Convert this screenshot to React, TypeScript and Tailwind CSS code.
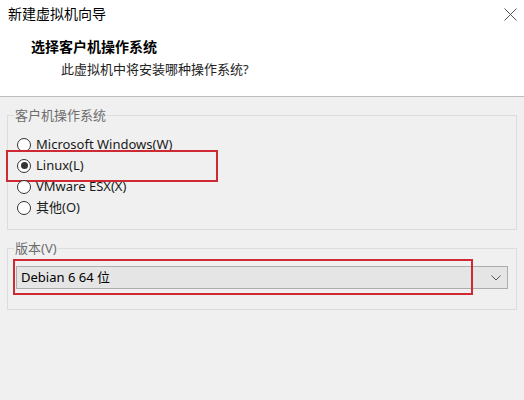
import React from 'react';

const cjk = "font-['Noto_Sans','Noto_Sans_CJK_SC',sans-serif]";

const options = [
  { label: 'Microsoft Windows(W)', checked: false },
  { label: 'Linux(L)', checked: true },
  { label: 'VMware ESX(X)', checked: false },
  { label: '其他(O)', checked: false },
];

const Radio: React.FC<{ checked: boolean }> = ({ checked }) => (
  <span className="w-[14px] h-[14px] rounded-full border border-[#333333] bg-white flex items-center justify-center flex-shrink-0">
    {checked && <span className="w-[7px] h-[7px] rounded-full bg-[#333333]" />}
  </span>
);

const App: React.FC = () => {
  return (
    <div className={`w-[524px] h-screen bg-[#f0f0f0] text-[13px] ${cjk}`}>
      {/* Wizard header */}
      <div className="h-[97px] bg-white border-b border-[#bdbdbd] relative">
        <div className="pl-[8px] pt-[4px] text-[14px] leading-[20px] text-black">新建虚拟机向导</div>
        <button className="absolute right-[6px] top-[6px] w-[16px] h-[16px] flex items-center justify-center text-[#555]">
          <svg width="13" height="13" viewBox="0 0 13 13" fill="none" stroke="currentColor" strokeWidth="1">
            <path d="M0.5 0.5 L12.5 12.5 M12.5 0.5 L0.5 12.5" />
          </svg>
        </button>
        <div className="pl-[31px] mt-[13px] text-[14px] leading-[20px] font-bold text-black">选择客户机操作系统</div>
        <div className="pl-[61px] mt-[2px] text-[13px] leading-[20px] text-[#222]">此虚拟机中将安装哪种操作系统?</div>
      </div>

      <div className="px-[7px]">
        {/* Guest OS group */}
        <fieldset className="mt-[9px] border border-[#dcdcdc] pb-[11px]">
          <legend className="ml-[6px] px-[1px] leading-[18px] text-[#6d6d6d]">客户机操作系统</legend>
          <div className="mt-[10px] ml-[9px]">
            {options.map((o) => (
              <div key={o.label} className="relative h-[21px] flex items-center gap-[5px] text-[#1a1a1a]">
                <Radio checked={o.checked} />
                <span className="text-[13px]">{o.label}</span>
                {o.checked && (
                  <span className="absolute -left-[11px] -top-[5px] w-[212px] h-[32px] border-2 border-[#cf2a33] pointer-events-none" />
                )}
              </div>
            ))}
          </div>
        </fieldset>

        {/* Version group */}
        <fieldset className="mt-[9px] border border-[#dcdcdc] pb-[20px]">
          <legend className="ml-[6px] px-[1px] leading-[18px] text-[#6d6d6d]">版本(V)</legend>
          <div className="relative mx-[8px] mt-[9px] h-[23px] bg-[#e5e5e5] border border-[#acacac] flex items-center pl-[4px] pr-[6px] text-black">
            <span className="flex-1">Debian 6 64 位</span>
            <svg width="10" height="6" viewBox="0 0 10 6" fill="none" stroke="#555" strokeWidth="1">
              <path d="M0.5 0.5 L5 5 L9.5 0.5" />
            </svg>
            <span className="absolute -left-[4px] -top-[8px] w-[460px] h-[36px] border-2 border-[#cf2a33] pointer-events-none" />
          </div>
        </fieldset>
      </div>
    </div>
  );
};

export default App;
